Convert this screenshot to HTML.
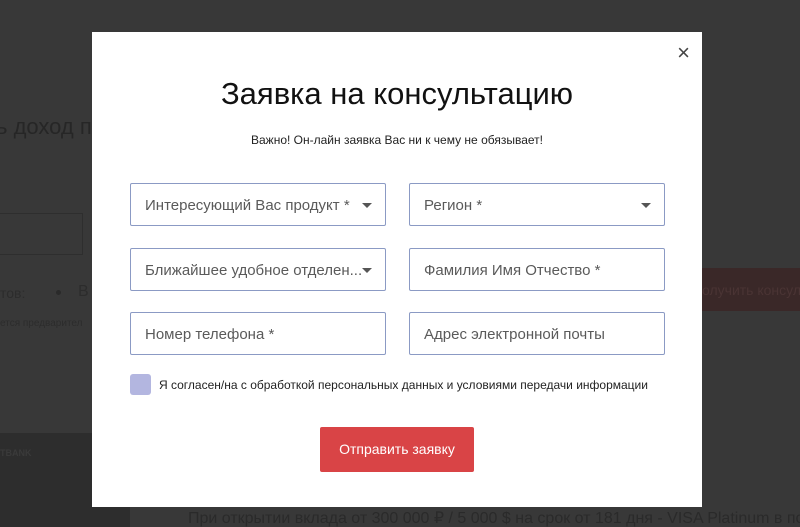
<!DOCTYPE html>
<html><head><meta charset="utf-8"><style>
*{box-sizing:border-box;margin:0;padding:0}
body{width:800px;height:527px;overflow:hidden;background:#383838;font-family:"Liberation Sans",sans-serif;position:relative}
.wrap{position:absolute;left:0;top:0;width:800px;height:527px;overflow:hidden}
.bg{position:absolute;color:#2a2a2a;white-space:nowrap}
.modal{position:absolute;left:92px;top:32px;width:610px;height:475px;background:#fff}
.f{position:absolute;width:256px;height:43px;border:1px solid #8b9ac4;border-radius:2px;font-size:15px;color:#5a5a5a;padding:13px 0 0 14px;white-space:nowrap;overflow:hidden}
.f.s::after{content:"";position:absolute;right:13px;top:19px;border-left:5px solid transparent;border-right:5px solid transparent;border-top:5px solid #555}
</style></head><body>
<div class="wrap">
<div class="bg" style="left:-4px;top:114px;font-size:22px;color:#262626">ь доход по</div>
<div class="bg" style="left:-2px;top:213px;width:85px;height:42px;border:1px solid #2e2e2e"></div>
<div class="bg" style="left:0;top:285px;font-size:14px;color:#2c2c2c">тов:</div>
<div class="bg" style="left:56px;top:290px;width:5px;height:5px;border-radius:50%;background:#2a2a2a"></div>
<div class="bg" style="left:78px;top:283px;font-size:16px;color:#2c2c2c">В</div>
<div class="bg" style="left:0;top:318px;font-size:10px;color:#2c2c2c">ется предварител</div>
<div class="bg" style="left:702px;top:268px;width:98px;height:43px;background:#3a2828"></div>
<div class="bg" style="left:702px;top:282px;width:98px;overflow:hidden;font-size:14px;color:#4a3434">олучить консуль</div>
<div class="bg" style="left:0;top:433px;width:130px;height:94px;background:#2d2d2d"></div>
<div class="bg" style="left:0;top:448px;font-size:9px;font-weight:bold;color:#3a3a3a">TBANK</div>
<div class="bg" style="left:188px;top:508px;width:612px;overflow:hidden;font-size:16px;color:#2a2a2a">При открытии вклада от 300 000 ₽ / 5 000 $ на срок от 181 дня - VISA Platinum в подарок</div>
</div>
<div class="modal">
<div style="position:absolute;right:12px;top:8px;font-size:22px;color:#444">×</div>
<div style="position:absolute;left:0;width:100%;top:44px;text-align:center;font-size:31px;color:#111">Заявка на консультацию</div>
<div style="position:absolute;left:0;width:100%;top:101px;text-align:center;font-size:12px;color:#222">Важно! Он-лайн заявка Вас ни к чему не обязывает!</div>
<div class="f s" style="left:38px;top:151px">Интересующий Вас продукт *</div>
<div class="f s" style="left:317px;top:151px">Регион *</div>
<div class="f s" style="left:38px;top:216px">Ближайшее удобное отделен...</div>
<div class="f" style="left:317px;top:216px">Фамилия Имя Отчество *</div>
<div class="f" style="left:38px;top:280px">Номер телефона *</div>
<div class="f" style="left:317px;top:280px">Адрес электронной почты</div>
<div style="position:absolute;left:38px;top:342px;width:21px;height:21px;border-radius:3px;background:#b3b6e0"></div>
<div style="position:absolute;left:67px;top:346px;font-size:12px;color:#222">Я согласен/на с обработкой персональных данных и условиями передачи информации</div>
<div style="position:absolute;left:228px;top:395px;width:154px;height:45px;border-radius:2px;background:#d94446;color:#fff;font-size:14px;text-align:center;line-height:45px">Отправить заявку</div>
</div>
</body></html>
